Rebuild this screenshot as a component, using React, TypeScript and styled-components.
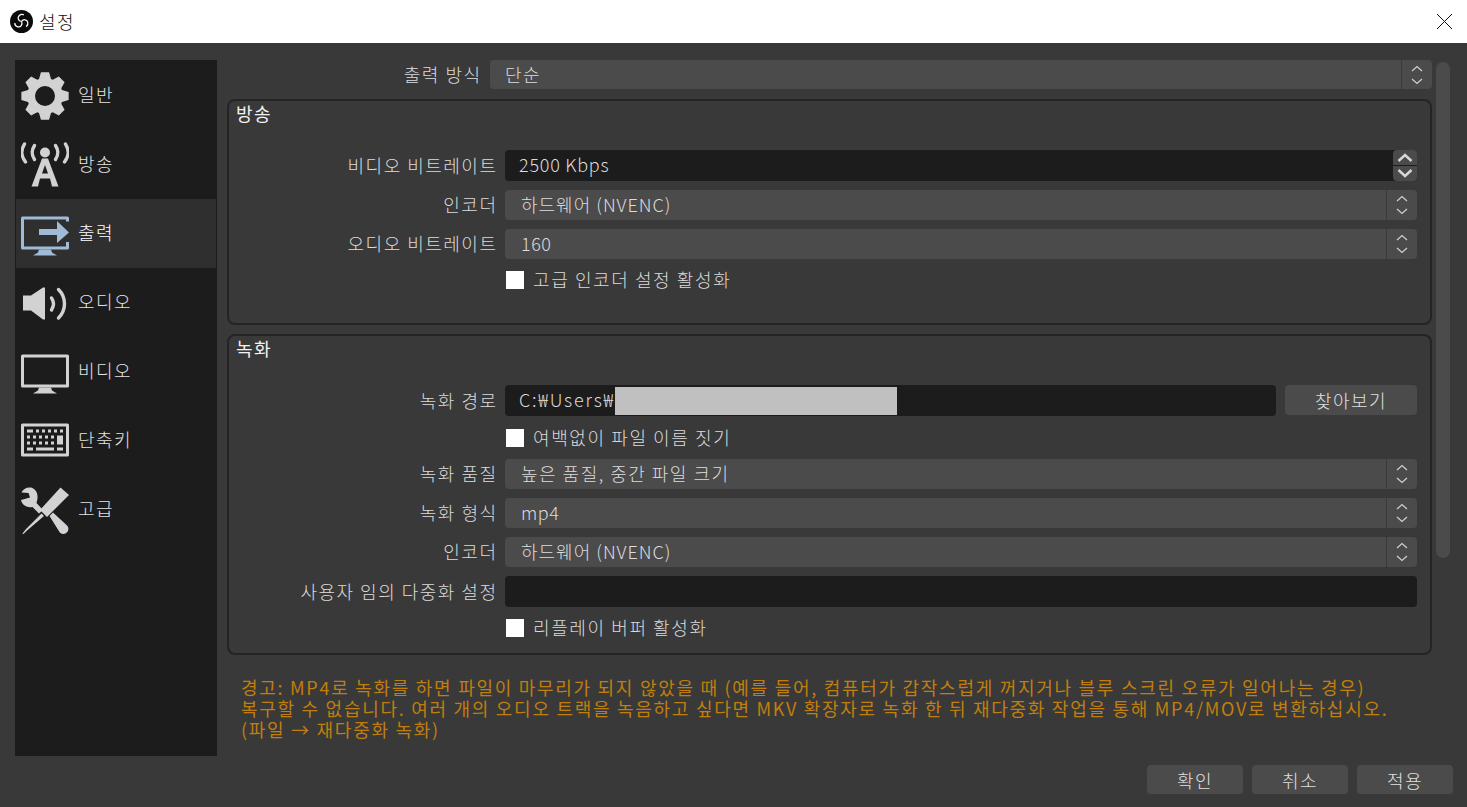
import React from 'react';
import styled, { createGlobalStyle } from 'styled-components';

const GlobalStyle = createGlobalStyle`
  html, body {
    margin: 0;
    padding: 0;
    background: #3a393a;
    overflow: hidden;
  }
  * {
    box-sizing: border-box;
  }
  body {
    font-family: "Noto Sans CJK KR", "Noto Sans", sans-serif;
    font-size: 18px;
    font-weight: 300;
    color: #e6e6e6;
  }
`;

const Window = styled.div`
  width: 1467px;
  height: 807px;
  display: flex;
  flex-direction: column;
  background: #3a393a;
`;

const TitleBar = styled.header`
  height: 43px;
  flex: none;
  background: #fff;
  color: #111;
  display: flex;
  align-items: center;
  padding: 0 14px 0 10px;
  gap: 6px;
`;

const TitleText = styled.span`
  font-size: 18px;
  letter-spacing: 1.5px;
  line-height: 41px;
  flex: 1;
`;

const Body = styled.div`
  flex: 1;
  display: flex;
  padding: 17px 0 0 15px;
  min-height: 0;
`;

const Sidebar = styled.nav`
  width: 202px;
  height: 696px;
  flex: none;
  background: #1d1c1d;
  padding: 1px;
  display: flex;
  flex-direction: column;
`;

const NavItem = styled.div<{ $active?: boolean }>`
  height: 69px;
  flex: none;
  display: flex;
  align-items: center;
  gap: 9px;
  padding-left: 5px;
  font-size: 18px;
  letter-spacing: 1.5px;
  color: ${p => (p.$active ? '#fff' : '#e4e4e4')};
  background: ${p => (p.$active ? '#2f2f2f' : 'transparent')};
`;

const NavLabel = styled.span`
  margin-top: -3px;
`;

const Main = styled.main`
  width: 1205px;
  margin-left: 10px;
  flex: none;
  display: flex;
  flex-direction: column;
`;

const Scrollbar = styled.div`
  width: 14px;
  height: 496px;
  margin: 2px 0 0 4px;
  flex: none;
  border-radius: 7px;
  background: #4c4b4c;
`;

const TopRow = styled.div`
  display: grid;
  grid-template-columns: 253px 942px;
  column-gap: 10px;
  align-items: center;
  height: 29px;
`;

const Group = styled.section<{ $height: number }>`
  height: ${p => p.$height}px;
  flex: none;
  border: 2px solid #252425;
  border-radius: 8px;
  padding: 0 13px 0 6px;
`;

const GroupTitle = styled.h3`
  margin: 0 0 0 1px;
  height: 26px;
  font-size: 18px;
  font-weight: 400;
  line-height: 24px;
  letter-spacing: 1.5px;
  color: #f2f2f2;
`;

const FirstGroup = styled(Group)`
  margin-top: 10px;
`;

const SecondGroup = styled(Group)`
  margin-top: 9px;
`;

const Rows = styled.div<{ $top: number }>`
  margin-top: ${p => p.$top}px;
  display: flex;
  flex-direction: column;
  gap: 9px;
`;

const Row = styled.div`
  display: grid;
  grid-template-columns: 261px 912px;
  column-gap: 9px;
  align-items: center;
`;

const Label = styled.label`
  text-align: right;
  font-size: 18px;
  line-height: 24px;
  letter-spacing: 1.5px;
  margin: -2px -1.5px 0 0;
  color: #dcdcdc;
  white-space: nowrap;
`;

const Select = styled.div`
  height: 30px;
  display: flex;
  align-items: stretch;
  background: #4c4b4c;
  border-radius: 4px;
  font-size: 18px;
  color: #dcdcdc;
`;

const TopSelect = styled(Select)`
  height: 29px;
`;

const SelectValue = styled.div<{ $pad?: number; $spacing?: number }>`
  flex: 1;
  padding-left: ${p => p.$pad ?? 16}px;
  letter-spacing: ${p => p.$spacing ?? 1.5}px;
  line-height: 28px;
  white-space: nowrap;
`;

const SelectArrow = styled.div`
  width: 31px;
  flex: none;
  border-left: 1px solid #3a393a;
  display: flex;
  align-items: center;
  justify-content: center;
`;

const TextField = styled.div`
  height: 31px;
  display: flex;
  align-items: center;
  background: #1d1c1d;
  border-radius: 4px;
  padding-left: 14px;
  font-size: 18px;
  color: #dcdcdc;
  white-space: nowrap;
`;

const SpinField = styled.div`
  height: 31px;
  display: flex;
  background: #1d1c1d;
  border-radius: 4px;
  padding-left: 14px;
  align-items: center;
  justify-content: space-between;
  font-size: 18px;
  letter-spacing: 0.75px;
  color: #dcdcdc;
`;

const SpinValue = styled.span`
  margin-top: -4px;
`;

const SpinButtons = styled.div`
  width: 24px;
  height: 31px;
  display: flex;
  flex-direction: column;
  gap: 1px;
`;

const SpinButton = styled.div<{ $up?: boolean }>`
  flex: 1;
  background: #4c4b4c;
  border-radius: ${p => (p.$up ? '4px 4px 0 0' : '0 0 4px 4px')};
  display: flex;
  align-items: center;
  justify-content: center;
`;

const PathText = styled.span`
  letter-spacing: 1.75px;
  margin-top: -3px;
`;

const Redacted = styled.div`
  width: 282px;
  height: 28px;
  flex: none;
  background: #c0c0c0;
`;

const PathRow = styled.div`
  display: flex;
  gap: 9px;
`;

const PathField = styled(TextField)`
  width: 771px;
  flex: none;
`;

const Button = styled.button`
  width: 132px;
  height: 30px;
  padding: 0;
  border: none;
  border-radius: 4px;
  background: #4c4b4c;
  color: #e0e0e0;
  font-family: inherit;
  font-size: 18px;
  font-weight: 300;
  letter-spacing: 1.5px;
  line-height: 28px;
`;

const CheckRow = styled.div<{ $height?: number }>`
  height: ${p => p.$height ?? 24}px;
  display: flex;
  align-items: center;
  gap: 9px;
  font-size: 18px;
  letter-spacing: 1.6px;
  color: #dcdcdc;
  padding-left: 1px;
`;

const CheckBox = styled.span`
  width: 18px;
  height: 18px;
  flex: none;
  background: #fff;
`;

const CheckText = styled.span`
  margin-top: -2px;
`;

const Warning = styled.p`
  margin: 22px 0 0 14px;
  font-size: 18px;
  font-weight: 400;
  letter-spacing: 1.72px;
  line-height: 21px;
  color: #c07f0c;
  white-space: pre-line;
`;

const Footer = styled.footer`
  flex: none;
  display: flex;
  justify-content: flex-end;
  gap: 9px;
  padding: 0 14px 13px 0;
`;

const FooterButton = styled(Button)`
  width: 96px;
  height: 29px;
`;

const Chevrons: React.FC = () => (
  <svg width="14" height="22" viewBox="0 0 14 22" fill="none" stroke="#d0d0d0" strokeWidth="1.2">
    <path d="M2 7 7 2.5 12 7M2 15 7 19.5 12 15" />
  </svg>
);

const gearPath = (() => {
  const pts: string[] = [];
  for (let i = 0; i < 8; i++) {
    const a = (i * Math.PI) / 4;
    const at = (r: number, d: number) =>
      `${(24 + r * Math.cos(a + d)).toFixed(2)} ${(24 + r * Math.sin(a + d)).toFixed(2)}`;
    pts.push(at(18, -0.34), at(24, -0.17), at(24, 0.17), at(18, 0.34));
  }
  return `M${pts.join('L')}Z M24 14a10 10 0 1 0 0 20a10 10 0 1 0 0-20Z`;
})();

const Icon = styled.svg.attrs({ width: 48, height: 48, viewBox: '0 0 48 48' })`
  flex: none;
  color: #d2d2d2;
`;

const BlueIcon = styled(Icon)`
  color: #a0bbd6;
`;

const GearIcon = () => (
  <Icon>
    <path d={gearPath} fill="currentColor" fillRule="evenodd" />
  </Icon>
);

const TowerIcon = () => (
  <Icon>
    <circle cx="24" cy="11.5" r="5" fill="currentColor" />
    <g fill="none" stroke="currentColor" strokeWidth="3.4" strokeLinecap="round">
      <path d="M13.5 4.5C10.5 9 10.5 14 13.5 18.5M34.5 4.5C37.5 9 37.5 14 34.5 18.5" />
      <path d="M3.5 3C-0.5 10 0 15 4.5 21M44.5 3C48.5 10 48 15 43.5 21" />
    </g>
    <path
      d="M21 17.5h6L37.5 45.5h-6.5L29 37.5H19L17 45.5H10.5ZM24 24 21 32.5h6Z"
      fill="currentColor"
      fillRule="evenodd"
    />
  </Icon>
);

const OutputIcon = () => (
  <BlueIcon>
    <path
      d="M1.5 6.5H46.5a1.5 1.5 0 0 1 1.5 1.5V11.5H45V9.5H3V36.5H45V32H48V38a1.5 1.5 0 0 1-1.5 1.5H1.5A1.5 1.5 0 0 1 0 38V8A1.5 1.5 0 0 1 1.5 6.5Z"
      fill="currentColor"
    />
    <path d="M18 19h18V11l12 11.5L36 33V25H18Z" fill="currentColor" />
    <path d="M18 39.5h12l1 3 5 3H12l5-3Z" fill="currentColor" />
  </BlueIcon>
);

const SpeakerIcon = () => (
  <Icon>
    <path d="M2 16.5h8L22 8.5h2V40.5h-2L10 31.5H2Z" fill="currentColor" />
    <g fill="none" stroke="currentColor" strokeWidth="3.4" strokeLinecap="round">
      <path d="M30.5 19C33 22.5 33 27 30.5 31" />
      <path d="M37.5 10.5C45.5 18.5 45.5 31 37.5 39" />
    </g>
  </Icon>
);

const MonitorIcon = () => (
  <Icon>
    <path
      d="M1.5 6.5H46.5a1.5 1.5 0 0 1 1.5 1.5V38a1.5 1.5 0 0 1-1.5 1.5H1.5A1.5 1.5 0 0 1 0 38V8A1.5 1.5 0 0 1 1.5 6.5ZM3 9.5V36.5H45V9.5Z"
      fill="currentColor"
      fillRule="evenodd"
    />
    <path d="M18 39.5h12l1 3 5 3H12l5-3Z" fill="currentColor" />
  </Icon>
);

const KeyboardIcon = () => (
  <Icon>
    <path
      d="M1.5 6.5H46.5a1.5 1.5 0 0 1 1.5 1.5V38a1.5 1.5 0 0 1-1.5 1.5H1.5A1.5 1.5 0 0 1 0 38V8A1.5 1.5 0 0 1 1.5 6.5ZM3 9.5V36.5H45V9.5Z"
      fill="currentColor"
      fillRule="evenodd"
    />
    <g fill="currentColor">
      <rect x="6" y="12.5" width="6" height="3" />
      <rect x="15" y="12.5" width="3" height="3" />
      <rect x="21" y="12.5" width="3" height="3" />
      <rect x="27" y="12.5" width="3" height="3" />
      <rect x="33" y="12.5" width="3" height="3" />
      <rect x="39" y="12.5" width="3" height="3" />
      <rect x="6" y="18.5" width="3" height="3" />
      <rect x="12" y="18.5" width="3" height="3" />
      <rect x="18" y="18.5" width="3" height="3" />
      <rect x="24" y="18.5" width="3" height="3" />
      <rect x="30" y="18.5" width="3" height="3" />
      <rect x="36" y="18.5" width="6" height="9" />
      <rect x="6" y="24.5" width="3" height="3" />
      <rect x="12" y="24.5" width="3" height="3" />
      <rect x="18" y="24.5" width="3" height="3" />
      <rect x="24" y="24.5" width="3" height="3" />
      <rect x="30" y="24.5" width="3" height="3" />
      <rect x="6" y="30.5" width="6" height="3" />
      <rect x="15" y="30.5" width="18" height="3" />
      <rect x="36" y="30.5" width="6" height="3" />
    </g>
  </Icon>
);

const ToolsIcon = () => (
  <Icon>
    <g fill="currentColor">
      <path d="M39.5 1.5 48 9 26 31 24 29 21.5 26.5 19 24Z" />
      <path d="M20.5 27.5 23 30 5.5 45 2 48.5 1.5 47.5 5 43Z" />
      <path d="M28.5 30 32 26.5 46 39.5a4.8 4.8 0 0 1-0.2 7 4.8 4.8 0 0 1-7 0Z" />
      <path d="M11 1.8C6 0.8 2 3 0.5 6.5L7.5 7 9 11.5 0 14c1 5 6 8 11.5 7L18 27.5 22 24 15.5 17C18 9 16 4 11 1.8Z" />
    </g>
  </Icon>
);

const ObsLogo = () => (
  <svg width="23" height="23" viewBox="0 0 48 48">
    <circle cx="24" cy="24" r="24" fill="#0b0b0b" />
    <g fill="none" stroke="#fff" strokeWidth="2.6">
      <path d="M24 24C17 23 15 16 19 12 22 9 26 9 29 10" />
      <path d="M24 24C28 18 35 20 37 25 38 29 37 32 34 35" />
      <path d="M24 24C27 30 22 37 16 35 12 34 10 30 10 27" />
    </g>
  </svg>
);

const navItems: { label: string; icon: React.ReactNode; active?: boolean }[] = [
  { label: '일반', icon: <GearIcon /> },
  { label: '방송', icon: <TowerIcon /> },
  { label: '출력', icon: <OutputIcon />, active: true },
  { label: '오디오', icon: <SpeakerIcon /> },
  { label: '비디오', icon: <MonitorIcon /> },
  { label: '단축키', icon: <KeyboardIcon /> },
  { label: '고급', icon: <ToolsIcon /> },
];

const SelectRow: React.FC<{ label: string; value: string; spacing?: number }> = ({ label, value, spacing }) => (
  <Row>
    <Label>{label}</Label>
    <Select>
      <SelectValue $spacing={spacing}>{value}</SelectValue>
      <SelectArrow>
        <Chevrons />
      </SelectArrow>
    </Select>
  </Row>
);

const CheckOption: React.FC<{ label: string; height?: number }> = ({ label, height }) => (
  <Row>
    <span />
    <CheckRow $height={height}>
      <CheckBox />
      <CheckText>{label}</CheckText>
    </CheckRow>
  </Row>
);

const App: React.FC = () => (
  <Window>
    <GlobalStyle />
    <TitleBar>
      <ObsLogo />
      <TitleText>설정</TitleText>
      <svg width="17" height="17" viewBox="0 0 17 17" stroke="#111" strokeWidth="1">
        <path d="M1 1 16 16M16 1 1 16" />
      </svg>
    </TitleBar>
    <Body>
      <Sidebar>
        {navItems.map(item => (
          <NavItem key={item.label} $active={item.active}>
            {item.icon}
            <NavLabel>{item.label}</NavLabel>
          </NavItem>
        ))}
      </Sidebar>
      <Main>
        <TopRow>
          <Label>출력 방식</Label>
          <TopSelect>
            <SelectValue $pad={15}>단순</SelectValue>
            <SelectArrow>
              <Chevrons />
            </SelectArrow>
          </TopSelect>
        </TopRow>

        <FirstGroup $height={226}>
          <GroupTitle>방송</GroupTitle>
          <Rows $top={23}>
            <Row>
              <Label>비디오 비트레이트</Label>
              <SpinField>
                <SpinValue>2500 Kbps</SpinValue>
                <SpinButtons>
                  <SpinButton $up>
                    <svg width="16" height="9" viewBox="0 0 16 9" fill="none" stroke="#d8d8d8" strokeWidth="2.4">
                      <path d="M1.5 8 8 2 14.5 8" />
                    </svg>
                  </SpinButton>
                  <SpinButton>
                    <svg width="16" height="9" viewBox="0 0 16 9" fill="none" stroke="#d8d8d8" strokeWidth="2.4">
                      <path d="M1.5 1 8 7 14.5 1" />
                    </svg>
                  </SpinButton>
                </SpinButtons>
              </SpinField>
            </Row>
            <SelectRow label="인코더" value="하드웨어 (NVENC)" spacing={1} />
            <SelectRow label="오디오 비트레이트" value="160" spacing={0.5} />
            <CheckOption label="고급 인코더 설정 활성화" />
          </Rows>
        </FirstGroup>

        <SecondGroup $height={321}>
          <GroupTitle>녹화</GroupTitle>
          <Rows $top={23}>
            <Row>
              <Label>녹화 경로</Label>
              <PathRow>
                <PathField>
                  <PathText>C:₩Users₩</PathText>
                  <Redacted />
                </PathField>
                <Button>찾아보기</Button>
              </PathRow>
            </Row>
            <CheckOption label="여백없이 파일 이름 짓기" height={25} />
            <SelectRow label="녹화 품질" value="높은 품질, 중간 파일 크기" />
            <SelectRow label="녹화 형식" value="mp4" spacing={0.5} />
            <SelectRow label="인코더" value="하드웨어 (NVENC)" spacing={1} />
            <Row>
              <Label>사용자 임의 다중화 설정</Label>
              <TextField />
            </Row>
            <CheckOption label="리플레이 버퍼 활성화" />
          </Rows>
        </SecondGroup>

        <Warning>
          {`경고: MP4로 녹화를 하면 파일이 마무리가 되지 않았을 때 (예를 들어, 컴퓨터가 갑작스럽게 꺼지거나 블루 스크린 오류가 일어나는 경우)
복구할 수 없습니다. 여러 개의 오디오 트랙을 녹음하고 싶다면 MKV 확장자로 녹화 한 뒤 재다중화 작업을 통해 MP4/MOV로 변환하십시오.
(파일 → 재다중화 녹화)`}
        </Warning>
      </Main>
      <Scrollbar />
    </Body>
    <Footer>
      <FooterButton>확인</FooterButton>
      <FooterButton>취소</FooterButton>
      <FooterButton>적용</FooterButton>
    </Footer>
  </Window>
);

export default App;
